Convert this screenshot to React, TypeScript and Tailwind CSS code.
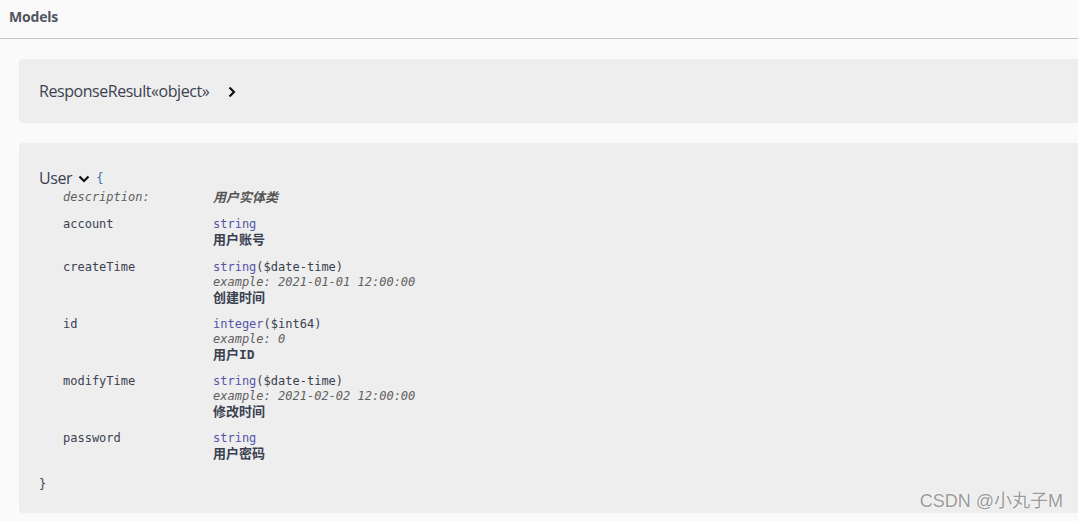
import React from "react";

type Prop = {
  name: string;
  type: string;
  format?: string;
  example?: string;
  desc: string;
  pb: string;
};

const props: Prop[] = [
  { name: "account", type: "string", desc: "用户账号", pb: "pb-[13px]" },
  { name: "createTime", type: "string", format: "($date-time)", example: "2021-01-01 12:00:00", desc: "创建时间", pb: "pb-[12px]" },
  { name: "id", type: "integer", format: "($int64)", example: "0", desc: "用户ID", pb: "pb-[12px]" },
  { name: "modifyTime", type: "string", format: "($date-time)", example: "2021-02-02 12:00:00", desc: "修改时间", pb: "pb-[12px]" },
  { name: "password", type: "string", desc: "用户密码", pb: "pb-[16px]" },
];

const mono = "font-['DejaVu_Sans_Mono','Liberation_Mono',monospace] text-[12px] leading-[15px]";
const cjk = "font-['DejaVu_Sans_Mono','Noto_Sans_CJK_SC',monospace] text-[13px] leading-[15px]";

const ChevronRight = () => (
  <svg width="10" height="12" viewBox="0 0 10 12" className="ml-[18px] mt-[1px]">
    <path d="M2.5 1.5 L7 6 L2.5 10.5" fill="none" stroke="#111" strokeWidth="2.2" />
  </svg>
);

const ChevronDown = () => (
  <svg width="12" height="8" viewBox="0 0 12 8" className="mx-[6px] mt-[2px]">
    <path d="M1.5 1.5 L6 6 L10.5 1.5" fill="none" stroke="#111" strokeWidth="2.2" />
  </svg>
);

export default function App() {
  return (
    <div className="relative min-h-[521px] bg-[#fafafa] text-[#3b4151] font-['Open_Sans','Noto_Sans',sans-serif]">
      <div className="h-[39px] border-b border-[#c6c7cc] pl-[9px] flex items-center">
        <h4 className="text-[14px] font-bold text-[#505560] tracking-[-0.2px] -mt-[5px]">Models</h4>
      </div>

      <div className="pl-[19px] pt-[20px] pb-[8px] flex flex-col gap-[20px]">
        <div className="h-[64px] bg-[#eeeeee] rounded-l-[4px] pl-[20px] flex items-center">
          <span className="text-[16px] tracking-[-0.45px] text-[#3b4151]">ResponseResult«object»</span>
          <ChevronRight />
        </div>

        <div className="h-[370px] bg-[#eeeeee] rounded-l-[4px] pl-[20px] pt-[25px]">
          <div className="flex items-center h-[20px]">
            <span className="text-[16px] tracking-[-0.4px] text-[#3b4151]">User</span>
            <ChevronDown />
            <span className={`${mono} text-[#3d6fa8]`}>{"{"}</span>
          </div>

          <div className="pl-[24px] mt-[2px]">
            <div className="flex pb-[12px]">
              <div className={`${mono} w-[150px] italic text-[#606060]`}>description:</div>
              <div className={`${cjk} italic font-bold text-[#555]`}>用户实体类</div>
            </div>
            {props.map((p) => (
              <div key={p.name} className={`flex ${p.pb}`}>
                <div className={`${mono} w-[150px] text-[#3b4151]`}>{p.name}</div>
                <div className="flex flex-col">
                  <div className={mono}>
                    <span className="text-[#55a]">{p.type}</span>
                    {p.format && <span className="text-[#3b4151]">{p.format}</span>}
                  </div>
                  {p.example && (
                    <div className={`${mono} italic text-[#606060]`}>example: {p.example}</div>
                  )}
                  <div className={`${cjk} font-bold text-[#3b4151]`}>{p.desc}</div>
                </div>
              </div>
            ))}
          </div>

          <div className={`${mono} text-[#3b4151]`}>{"}"}</div>
        </div>
      </div>

      <div className="absolute right-[15px] bottom-[6px] text-[18px] text-[#9a9a9a] font-['Liberation_Sans','Noto_Sans_CJK_SC',sans-serif] [text-shadow:0_0_2px_#fff,0_0_1px_#fff]">
        CSDN @小丸子M
      </div>
    </div>
  );
}
